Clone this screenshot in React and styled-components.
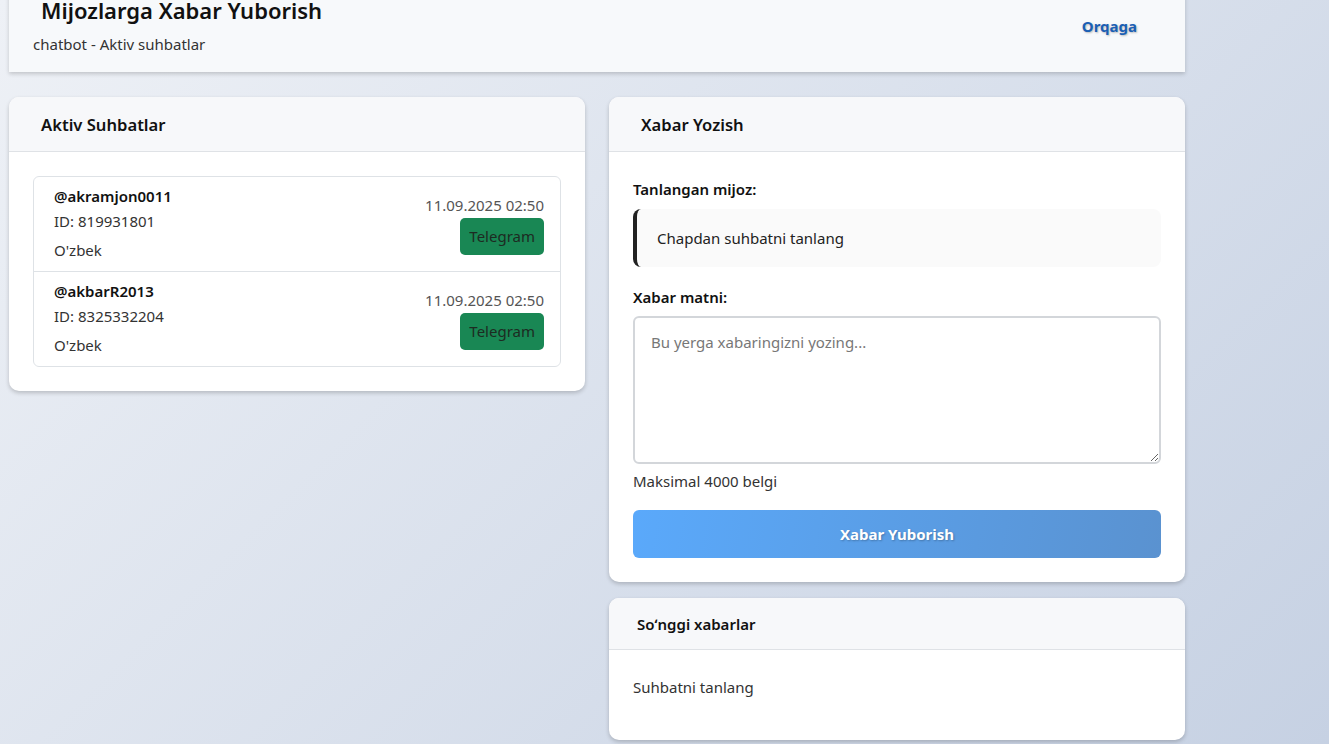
import React from 'react';
import styled, { createGlobalStyle } from 'styled-components';

const GlobalStyle = createGlobalStyle`
  html, body {
    margin: 0;
    padding: 0;
    height: 100%;
    overflow: hidden;
  }
  body {
    font-family: "Noto Sans", "Open Sans", sans-serif;
    color: #212529;
    background: linear-gradient(135deg, #eef1f6 0%, #c6d1e3 100%);
    min-height: 744px;
  }
`;

const Page = styled.div`
  width: 1176px;
  padding: 0 0 0 9px;
  display: flex;
  flex-direction: column;
  gap: 25px;
`;

const TopBar = styled.header`
  margin-top: -26px;
  height: 98px;
  box-sizing: border-box;
  background: #f7f9fb;
  box-shadow: 0 2px 4px rgba(0, 0, 0, 0.18);
  display: flex;
  justify-content: space-between;
  align-items: flex-start;
  padding: 21px 48px 0 24px;
`;

const TitleBlock = styled.div`
  display: flex;
  flex-direction: column;
  gap: 8px;
`;

const Title = styled.h1`
  margin: 0 0 0 8px;
  font-size: 22px;
  line-height: 30px;
  font-weight: 600;
  color: #111;
`;

const Subtitle = styled.div`
  font-size: 15px;
  line-height: 22px;
  color: #333;
`;

const BackLink = styled.a`
  margin-top: 20px;
  font-size: 15px;
  line-height: 22px;
  font-weight: 700;
  color: #1a5fb4;
  text-decoration: none;
  text-shadow: 1px 1px 2px rgba(0, 0, 0, 0.25);
  cursor: pointer;
`;

const Columns = styled.div`
  display: grid;
  grid-template-columns: 576px 576px;
  gap: 24px;
  align-items: start;
`;

const Column = styled.div`
  display: flex;
  flex-direction: column;
  gap: 16px;
`;

const Card = styled.section`
  background: #fff;
  border-radius: 10px;
  box-shadow: 0 2px 4px rgba(0, 0, 0, 0.2);
  overflow: hidden;
`;

const CardHeader = styled.div`
  height: ${p => (p.$small ? '52px' : '55px')};
  box-sizing: border-box;
  background: #f7f8fa;
  border-bottom: 1px solid #dfe2e6;
  display: flex;
  align-items: center;
  padding: 0 ${p => (p.$small ? '28px' : '32px')};
  font-size: ${p => (p.$small ? '15px' : '16.6px')};
  font-weight: 600;
  color: #111;
`;

const CardBody = styled.div`
  padding: ${p => p.$pad || '24px'};
`;

const List = styled.div`
  border: 1px solid #dee2e6;
  border-radius: 6px;
`;

const Item = styled.div`
  display: flex;
  justify-content: space-between;
  align-items: center;
  padding: 0 16px 0 20px;
  height: 94px;
  & + & {
    border-top: 1px solid #dee2e6;
  }
`;

const ItemInfo = styled.div`
  display: flex;
  flex-direction: column;
`;

const Username = styled.div`
  font-size: 15px;
  font-weight: 600;
  color: #111;
  line-height: 22px;
`;

const Meta = styled.div`
  font-size: 15px;
  color: #333;
  line-height: 28px;
  & + & {
    margin-top: 1px;
  }
`;

const ItemSide = styled.div`
  display: flex;
  flex-direction: column;
  align-items: flex-end;
  gap: 2px;
`;

const Time = styled.div`
  font-size: 15px;
  line-height: 22px;
  color: #555;
`;

const Badge = styled.span`
  background: #198754;
  color: #1d2b22;
  font-size: 15px;
  border-radius: 5px;
  padding: 0 9px;
  height: 37px;
  display: flex;
  align-items: center;
`;

const Label = styled.div`
  font-size: 15px;
  line-height: 24px;
  font-weight: 600;
  color: #111;
  margin-bottom: ${p => p.$gap || '8px'};
`;

const Selected = styled.div`
  background: #fafafa;
  border-left: 4px solid #222;
  border-radius: 8px;
  height: 58px;
  box-sizing: border-box;
  display: flex;
  align-items: center;
  padding-left: 20px;
  font-size: 15px;
  color: #222;
  margin-bottom: 18px;
`;

const TextArea = styled.textarea`
  display: block;
  width: 100%;
  height: 148px;
  box-sizing: border-box;
  border: 2px solid #d3d6da;
  border-radius: 6px;
  padding: 14px 16px;
  font-family: inherit;
  font-size: 15px;
  color: #333;
  &::placeholder {
    color: #777;
  }
`;

const Hint = styled.div`
  font-size: 15px;
  line-height: 22px;
  color: #333;
  margin: 6px 0 18px;
`;

const SendButton = styled.button`
  display: block;
  width: 100%;
  height: 48px;
  border: none;
  border-radius: 6px;
  background: linear-gradient(100deg, #5aa9fb 0%, #5a92d0 100%);
  color: #fff;
  font-family: inherit;
  font-size: 15px;
  font-weight: 700;
  text-shadow: 1px 1px 2px rgba(0, 0, 0, 0.25);
  cursor: pointer;
`;

const Empty = styled.div`
  font-size: 15px;
  line-height: 22px;
  color: #333;
`;

const chats = [
  { user: '@akramjon0011', id: '819931801', lang: "O'zbek", time: '11.09.2025 02:50' },
  { user: '@akbarR2013', id: '8325332204', lang: "O'zbek", time: '11.09.2025 02:50' },
];

export default function App() {
  return (
    <>
      <GlobalStyle />
      <Page>
        <TopBar>
          <TitleBlock>
            <Title>Mijozlarga Xabar Yuborish</Title>
            <Subtitle>chatbot - Aktiv suhbatlar</Subtitle>
          </TitleBlock>
          <BackLink>Orqaga</BackLink>
        </TopBar>
        <Columns>
          <Card>
            <CardHeader>Aktiv Suhbatlar</CardHeader>
            <CardBody>
              <List>
                {chats.map(c => (
                  <Item key={c.user}>
                    <ItemInfo>
                      <Username>{c.user}</Username>
                      <Meta>ID: {c.id}</Meta>
                      <Meta>{c.lang}</Meta>
                    </ItemInfo>
                    <ItemSide>
                      <Time>{c.time}</Time>
                      <Badge>Telegram</Badge>
                    </ItemSide>
                  </Item>
                ))}
              </List>
            </CardBody>
          </Card>
          <Column>
            <Card>
              <CardHeader>Xabar Yozish</CardHeader>
              <CardBody $pad="25px 24px 24px">
                <Label>Tanlangan mijoz:</Label>
                <Selected>Chapdan suhbatni tanlang</Selected>
                <Label $gap="7px">Xabar matni:</Label>
                <TextArea placeholder="Bu yerga xabaringizni yozing..." />
                <Hint>Maksimal 4000 belgi</Hint>
                <SendButton>Xabar Yuborish</SendButton>
              </CardBody>
            </Card>
            <Card>
              <CardHeader $small>Soʻnggi xabarlar</CardHeader>
              <CardBody $pad="26px 24px 42px">
                <Empty>Suhbatni tanlang</Empty>
              </CardBody>
            </Card>
          </Column>
        </Columns>
      </Page>
    </>
  );
}
